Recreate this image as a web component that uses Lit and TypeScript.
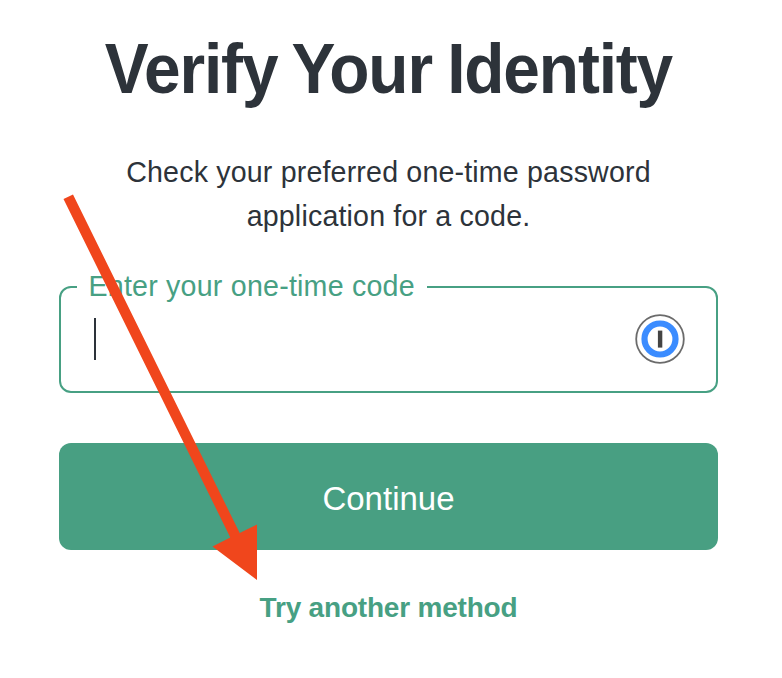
import { LitElement, html, css } from "lit";
import { customElement } from "lit/decorators.js";

@customElement("password-badge")
class PasswordBadge extends LitElement {
  static styles = css`
    :host { display: block; width: 50px; height: 50px; }
    svg { display: block; }
  `;
  render() {
    return html`<svg width="50" height="50" viewBox="0 0 50 50">
      <circle cx="25" cy="25" r="23.8" fill="#fff" stroke="#6b6b6b" stroke-width="1.8" />
      <circle cx="25" cy="25" r="15.5" fill="#fff" stroke="#3b8cff" stroke-width="6.2" />
      <rect x="22.9" y="16.6" width="4.4" height="17" fill="#444" />
    </svg>`;
  }
}

@customElement("app-root")
class AppRoot extends LitElement {
  static styles = css`
    :host {
      display: block;
      position: relative;
      width: 782px;
      height: 678px;
      overflow: hidden;
      background: #fff;
      color: #2d333a;
      font-family: "Liberation Sans", Arial, sans-serif;
    }
    main {
      box-sizing: border-box;
      width: 659px;
      margin-left: 59px;
      padding-top: 30px;
      display: flex;
      flex-direction: column;
      align-items: center;
    }
    h1 {
      margin: 0;
      height: 80px;
      font-size: 69.5px;
      line-height: 78px;
      font-weight: 700;
      letter-spacing: -1.2px;
      word-spacing: -2px;
      white-space: nowrap;
      transform: scaleX(0.947);
    }
    p {
      margin: 40px 0 0;
      font-size: 28.6px;
      line-height: 44px;
      letter-spacing: 0.17px;
      text-align: center;
      white-space: nowrap;
    }
    fieldset {
      box-sizing: border-box;
      width: 659px;
      height: 124px;
      margin: 31px 0 0;
      padding: 0 31px 0 33px;
      border: 2px solid #47a083;
      border-radius: 12px;
      min-width: 0;
    }
    legend {
      margin-left: -17px;
      padding: 0 12px 0 11.5px;
      height: 35px;
      line-height: 34px;
      font-size: 28.6px;
      letter-spacing: 0.22px;
      color: #47a083;
      white-space: nowrap;
    }
    .row {
      display: flex;
      align-items: center;
      justify-content: space-between;
      height: 70px;
    }
    .caret { width: 2px; height: 42px; background: #2d333a; }
    button {
      width: 659px;
      height: 107px;
      margin-top: 50px;
      padding: 4px 0 0;
      border: 0;
      border-radius: 12px;
      background: #489f82;
      color: #fff;
      font: 33px "Liberation Sans", Arial, sans-serif;
    }
    a {
      margin-top: 38px;
      line-height: 40px;
      font-size: 28px;
      font-weight: 700;
      letter-spacing: -0.2px;
      color: #47a083;
      white-space: nowrap;
    }
    .arrow { position: absolute; left: 0; top: 0; pointer-events: none; }
  `;
  render() {
    return html`
      <main>
        <h1>Verify Your Identity</h1>
        <p>Check your preferred one-time password<br />application for a code.</p>
        <fieldset>
          <legend>Enter your one-time code</legend>
          <div class="row"><span class="caret"></span><password-badge></password-badge></div>
        </fieldset>
        <button>Continue</button>
        <a>Try another method</a>
      </main>
      <svg class="arrow" width="782" height="678" viewBox="0 0 782 678">
        <path fill="#f0461c" d="M63.5 199 73 194.5 239.7 533 257 524.5V580L212.5 546.5 230.3 537.5Z" />
      </svg>
    `;
  }
}
